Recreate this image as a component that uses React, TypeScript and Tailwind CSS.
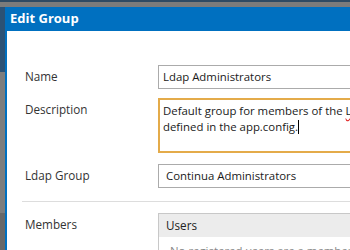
import React from 'react';

const font = { fontFamily: '"Open Sans", "Noto Sans", sans-serif' };

const Row = ({ label, children, top = false }: { label: string; children: React.ReactNode; top?: boolean }) => (
  <div className={`flex ${top ? 'items-start' : 'items-center'}`}>
    <div className={`w-[151px] shrink-0 pl-[18px] text-[11.7px] text-[#333] ${top ? 'pt-[3px]' : ''}`}>{label}</div>
    {children}
  </div>
);

const App = () => {
  return (
    <div className="w-[350px] h-[250px] overflow-hidden flex flex-col bg-[#7b7b7b]" style={font}>
      <div className="h-[2px] bg-[#2e4a63] shrink-0" />
      <div className="h-[5px] bg-[#7b7b7b] shrink-0" />
      <div className="flex flex-1 min-h-0">
        <div className="w-[5px] shrink-0 flex flex-col">
          <div className="h-[65px] bg-[#2b5276]" />
          <div className="h-[141px] bg-[#7d7d7d]" />
          <div className="flex-1 bg-[#686868]" />
        </div>
        <div className="flex-1 min-w-0 bg-white border-l-2 border-[#0070c0] overflow-hidden">
          <div className="h-[24px] bg-[#0070c0] flex items-center pl-[3px] text-white font-bold text-[13px]">
            Edit Group
          </div>
          <div className="pt-[34px] flex flex-col">
            <Row label="Name">
              <div className="w-[300px] shrink-0 h-[24px] border border-[#ababab] flex items-center pl-[4px] text-[11.4px] text-[#1a1a1a] whitespace-nowrap">
                Ldap Administrators
              </div>
            </Row>
            <div className="h-[9px]" />
            <Row label="Description" top>
              <div className="w-[300px] shrink-0 h-[55px] border-2 border-[#e4ab4a] pl-[3px] pt-[3px] text-[11.4px] leading-[16px] text-[#1a1a1a] whitespace-nowrap">
                <div>
                  Default group for members of the{' '}
                  <span className="underline decoration-wavy decoration-[#e02020] underline-offset-2">Ldap</span> group
                </div>
                <div className="flex items-center">
                  defined in the app.config.
                  <span className="inline-block w-px h-[14px] bg-black" />
                </div>
              </div>
            </Row>
            <div className="h-[11px]" />
            <Row label="Ldap Group">
              <div className="w-[300px] shrink-0 h-[24px] border border-[#ababab] flex items-center pl-[7px] text-[11.4px] text-[#1a1a1a] whitespace-nowrap">
                Continua Administrators
              </div>
            </Row>
            <div className="ml-[15px] mt-[13px] h-px bg-[#dddddd]" />
            <div className="h-[11px]" />
            <Row label="Members" top>
              <div className="w-[300px] shrink-0 border border-[#c8c8c8]">
                <div className="h-[23px] bg-[#ececec] flex items-center pl-[7px] text-[11.7px] text-[#222]">Users</div>
                <div className="pl-[11px] pt-[5px] text-[11.4px] text-[#888] whitespace-nowrap">
                  No registered users are a member of this group.
                </div>
              </div>
            </Row>
          </div>
        </div>
      </div>
    </div>
  );
};

export default App;
